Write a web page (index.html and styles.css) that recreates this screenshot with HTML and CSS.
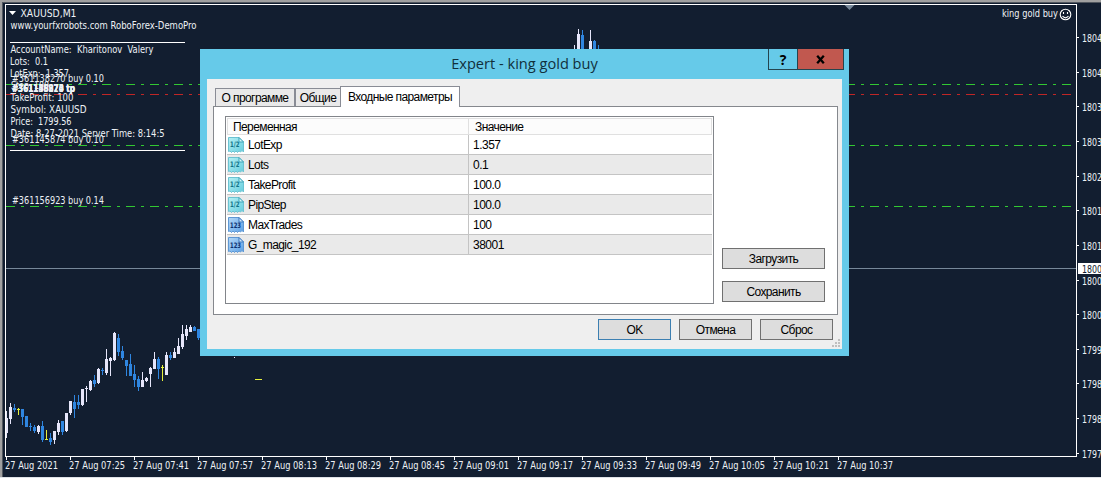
FILE: index.html
```html
<!DOCTYPE html>
<html lang="ru">
<head>
<meta charset="utf-8">
<title>XAUUSD,M1</title>
<link rel="stylesheet" href="styles.css">
</head>
<body>
<main class="terminal">
  <svg class="chart" width="1101" height="478" viewBox="0 0 1101 478">
    <path class="edge" d="M0 0H1101V2H2V478H0Z"/>
    <path class="edge-dark" d="M2 2H1101V3H3V478H2Z"/>
    <path class="edge-light" d="M0 477H1101V478H0Z"/>
    <g shape-rendering="crispEdges">
      <path class="order" d="M6 84.5H1073"/>
      <path class="order" d="M6 145.5H1073"/>
      <path class="order" d="M6 206.5H1073"/>
      <path class="profit" d="M6 94.5H1073"/>
      <path class="price" d="M6 268.5H1076"/>
      <path class="frame" d="M5.500 4.500H1076.500V456.500H5.500Z"/>
      <path class="rule" d="M10 42.500H185M10 150.500H185"/>
      <path class="rule" id="ticks"/>
      <path class="bull" id="bull"/>
      <path class="bear" id="bear"/>
      <path class="doji" id="doji"/>
    </g>
    <path class="shift" d="M844.500 5H854.500L849.500 10Z"/>
    <path class="white" d="M9 11H16L12.500 15Z"/>
    <rect class="white" x="1078" y="263" width="23" height="11"/>
    <g class="label">
      <text x="20.500" y="16.500" textLength="56">XAUUSD,M1</text>
      <text x="10.500" y="29" textLength="186">www.yourfxrobots.com RoboForex-DemoPro</text>
      <text x="10.500" y="53" textLength="143" xml:space="preserve">AccountName:  Kharitonov  Valery</text>
      <text x="10" y="65" textLength="38" xml:space="preserve">Lots:  0.1</text>
      <text x="10" y="77" textLength="59" xml:space="preserve">LotExp:  1.357</text>
      <text x="12" y="82" textLength="92">#361138270 buy 0.10</text>
      <text x="11" y="89" textLength="38">Step: 100</text>
      <g class="bold">
        <text x="12" y="92" textLength="63">#361138270 tp</text>
        <text x="12" y="92" textLength="63">#361145874 tp</text>
        <text x="12" y="92" textLength="63">#361156923 tp</text>
      </g>
      <text x="10.500" y="101" textLength="63">TakeProfit: 100</text>
      <text x="10.500" y="113" textLength="76">Symbol: XAUUSD</text>
      <text x="10.500" y="125" textLength="61" xml:space="preserve">Price:  1799.56</text>
      <text x="10.500" y="137" textLength="154">Date: 8-27-2021 Server Time: 8:14:5</text>
      <text x="12" y="143" textLength="92">#361145874 buy 0.10</text>
      <text x="12" y="204" textLength="92">#361156923 buy 0.14</text>
      <text x="1002" y="17" textLength="56">king gold buy</text>
    </g>
    <g class="label" id="axis"></g>
    <g class="smile">
      <circle cx="1065.500" cy="14.500" r="5.300"/>
      <path d="M1062.500 16.200Q1065.500 19.500 1068.500 16.200M1063.500 12V14M1067.500 12V14"/>
    </g>
  </svg>

  <section class="dialog">
    <header class="titlebar">
      <h1 class="title">Expert - king gold buy</h1>
      <div class="window-buttons">
        <button class="help">?</button>
        <button class="close"><svg width="9" height="9" viewBox="0 0 9 9"><path d="M1.200 .8 7.800 8.200M7.800 .8 1.200 8.200"/></svg></button>
      </div>
    </header>
    <div class="client">
      <nav class="tabs">
        <button class="tab about">О программе</button>
        <button class="tab common">Общие</button>
        <button class="tab active">Входные параметры</button>
      </nav>
      <div class="page">
        <div class="table">
          <div class="row head"><span class="name">Переменная</span><span class="value">Значение</span></div>
          <div class="row"><span class="name"><svg class="icon"><use href="#real"/></svg>LotExp</span><span class="value">1.357</span></div>
          <div class="row"><span class="name"><svg class="icon"><use href="#real"/></svg>Lots</span><span class="value">0.1</span></div>
          <div class="row"><span class="name"><svg class="icon"><use href="#real"/></svg>TakeProfit</span><span class="value">100.0</span></div>
          <div class="row"><span class="name"><svg class="icon"><use href="#real"/></svg>PipStep</span><span class="value">100.0</span></div>
          <div class="row"><span class="name"><svg class="icon"><use href="#int"/></svg>MaxTrades</span><span class="value">100</span></div>
          <div class="row"><span class="name"><svg class="icon"><use href="#int"/></svg>G_magic_192</span><span class="value">38001</span></div>
        </div>
        <div class="side">
          <button class="btn">Загрузить</button>
          <button class="btn">Сохранить</button>
        </div>
      </div>
      <footer class="actions">
        <button class="btn default">OK</button>
        <button class="btn">Отмена</button>
        <button class="btn">Сброс</button>
      </footer>
      <svg class="grip" width="8" height="8" viewBox="0 0 8 8"><path d="M6 0h2v2h-2zM3 3h2v2h-2zM6 3h2v2h-2zM0 6h2v2h-2zM3 6h2v2h-2zM6 6h2v2h-2z"/></svg>
    </div>
  </section>
</main>

<svg class="defs" width="0" height="0">
  <defs>
    <linearGradient id="cyan" x2="1" y2="1"><stop offset="0" stop-color="#b4f0f4"/><stop offset="1" stop-color="#66cddd"/></linearGradient>
    <linearGradient id="blue" x2="1" y2="1"><stop offset="0" stop-color="#b4d8f8"/><stop offset="1" stop-color="#5b9fe4"/></linearGradient>
    <symbol id="real" viewBox="0 0 16 16">
      <path d="M.5 .5H11L15.500 5V15L14 13.500 12.500 15 11 14 9.500 15.500 8 14 6.500 15.500 5 14 3.500 15.500 2 14 .5 14.500Z" fill="url(#cyan)" stroke="#6cc3d2"/>
      <path d="M11 .5V5H15.500Z" fill="#d8f8fa" stroke="#3fa3b8"/>
      <text class="glyph real" x="2" y="9.500" textLength="9.500" lengthAdjust="spacingAndGlyphs">1/2</text>
    </symbol>
    <symbol id="int" viewBox="0 0 16 16">
      <path d="M.5 .5H11L15.500 5V15L14 13.500 12.500 15 11 14 9.500 15.500 8 14 6.500 15.500 5 14 3.500 15.500 2 14 .5 14.500Z" fill="url(#blue)" stroke="#5f98d4"/>
      <path d="M11 .5V5H15.500Z" fill="#d4e9fc" stroke="#3c79be"/>
      <text class="glyph int" x="2" y="11" textLength="11" lengthAdjust="spacingAndGlyphs">123</text>
    </symbol>
  </defs>
</svg>
<script src="chart.js"></script>
</body>
</html>
```
FILE: styles.css
```css
* { box-sizing: border-box; }
body { margin: 0; background: #121e30; }
button { font: inherit; color: inherit; letter-spacing: inherit; padding: 0; margin: 0; border-radius: 0; }
.defs { position: absolute; }

.terminal { position: relative; width: 1101px; height: 478px; overflow: hidden; background: #121e30; }
.chart { display: block; }
.chart path { fill: none; }
.chart .edge { fill: #a0a0a0; }
.chart .edge-dark { fill: #50565e; }
.chart .edge-light { fill: #dfe3e8; }
.chart .frame, .chart .rule { stroke: #fff; }
.chart .order { stroke: #32c832; stroke-dasharray: 9 6 3 6; }
.chart .profit { stroke: #c02626; stroke-dasharray: 9 6 3 6; }
.chart .price { stroke: #778899; }
.chart .shift { fill: #778899; }
.chart .white { fill: #fff; }
.chart .bull { fill: #e6e6fa; }
.chart .bear { fill: #2f86e0; }
.chart .doji { fill: #e6f03c; }
.label { font: 10.3px "DejaVu Sans Condensed", "DejaVu Sans", sans-serif; fill: #eef2f6; }
.label .bold { font-weight: bold; font-size: 10px; }
.label .current { fill: #121e30; }
.smile { fill: none; stroke: #fff; stroke-width: 1.1; }

.dialog {
  position: absolute; left: 200px; top: 49px; width: 649px; height: 307px;
  display: flex; flex-direction: column; padding: 0 7px 7px;
  background: #66cae9; color: #000;
  font: 12px "Liberation Sans", Arial, sans-serif; letter-spacing: -.6px;
}
.titlebar { height: 30px; display: grid; grid-template-columns: 1fr; letter-spacing: 0; }
.title {
  grid-area: 1 / 1; margin: 0; text-align: center; color: #11303c;
  font: 14.6px/29px "Open Sans", "Noto Sans", sans-serif;
}
.window-buttons { grid-area: 1 / 1; justify-self: end; display: flex; height: 21px; margin-right: -2px; }
.window-buttons button { border: 1px solid #24454f; border-top: 0; background: none; font: bold 14px "Open Sans", sans-serif; }
.window-buttons .help { width: 29px; border-right: 0; }
.window-buttons .close { width: 47px; background: #c1584f; display: flex; align-items: center; justify-content: center; }
.close path { stroke: #000; stroke-width: 2.3; }

.client { position: relative; height: 270px; padding: 7px 4px 0 6px; background: #efefef; }
.tabs { display: flex; align-items: flex-end; height: 20px; padding-left: 2px; }
.tab { height: 18px; border: 1px solid #898c95; border-bottom: 0; background: #e9e9e9; padding-top: 1px; white-space: nowrap; }
.about { width: 80px; }
.common { width: 46px; }
.tab.active { position: relative; width: 120px; height: 21px; margin: 0 0 -1px -1px; background: #fff; padding: 0 0 1px; }
.page { display: flex; gap: 8px; height: 209px; padding: 9px 12px 0 11px; border: 1px solid #85888d; background: #fff; }
.table { width: 489px; height: 188px; padding: 1px; border: 1px solid #82858a; }
.row { display: flex; height: 20px; border-bottom: 1px solid #c4c4c4; }
.row:not(.head) .value { letter-spacing: -.5px; }
.row:nth-child(odd):not(.head) { background: #eaeaea; }
.row.head { height: 17px; border: 1px solid #e0e0e0; background: #fcfcfc; }
.name { display: flex; align-items: center; width: 242px; padding-left: 1px; gap: 4px; border-right: 1px solid #c4c4c4; }
.value { display: flex; align-items: center; padding-left: 4px; }
.head .name { width: 241px; padding-left: 5px; border-color: #e0e0e0; }
.head .value { padding-left: 6px; }
.icon { width: 16px; height: 16px; }
.glyph { font: bold 7.5px "DejaVu Sans", sans-serif; letter-spacing: 0; }
.glyph.real { fill: #107487; }
.glyph.int { fill: #0b2f70; }
.side { display: flex; flex-direction: column; gap: 12px; width: 103px; padding-top: 132px; }
.btn { width: 73px; height: 21px; border: 1px solid #707070; background: #dddddd; }
.side .btn { width: 103px; }
.btn.default { border-color: #3c7fb1; }
.actions { display: flex; justify-content: flex-end; gap: 8px; padding: 4px 5px 0 0; }
.grip { position: absolute; right: 2px; bottom: 2px; fill: #bfbfbf; }
```
FILE: chart.js
```js
// Each bar: x, high, low, body top, body bottom, series.
const bars = [
  [6,411,438,418,433,'bull'],[10,403,424,407,419,'bull'],[14,404,412,408,410,'bear'],
  [22,409,425,409,417,'bear'],[26,416,427,416,427,'bear'],[30,423,431,426,427,'bear'],
  [34,425,433,427,431,'bear'],[38,425,434,426,432,'bull'],[42,421,442,426,440,'bear'],
  [50,433,445,438,442,'bear'],[54,431,444,431,440,'bull'],[58,420,435,423,432,'bull'],
  [62,421,435,421,432,'bear'],[66,413,432,413,431,'bull'],[70,401,415,401,413,'bull'],
  [74,395,418,402,409,'bear'],[78,395,409,402,405,'bear'],[82,389,406,389,405,'bull'],
  [86,386,402,388,389,'bull'],[90,380,391,381,390,'bull'],[94,375,387,380,384,'bear'],
  [98,368,384,369,383,'bull'],[102,368,375,370,371,'bear'],[106,349,375,359,373,'bull'],
  [110,357,376,358,361,'bull'],[114,332,361,333,360,'bull'],[118,334,356,338,352,'bear'],
  [122,346,360,351,358,'bear'],[126,360,376,360,366,'bear'],[130,354,376,364,376,'bear'],
  [134,365,387,374,380,'bear'],[138,376,391,379,387,'bear'],[142,372,387,380,387,'bull'],
  [146,377,382,378,381,'bull'],[150,367,387,368,374,'bull'],[154,352,369,359,369,'bull'],
  [158,357,379,359,369,'bear'],[166,352,375,355,375,'bull'],[170,352,360,355,358,'bear'],
  [174,348,358,352,358,'bull'],[178,338,354,346,354,'bull'],[182,325,349,334,347,'bull'],
  [186,325,340,329,336,'bull'],[190,325,332,327,332,'bull'],[194,326,331,327,331,'bear'],
  [198,329,340,329,338,'bear'],
  [574,45,50,48,48,'bull'],[578,29,50,34,50,'bull'],[582,30,50,35,50,'bear'],
  [590,30,50,41,50,'bull'],[594,40,50,41,50,'bear'],[598,45,50,48,48,'bear'],
  [234,357,358,357,357,'bull']
];
const paths = { bull: '', bear: '' };
for (const [x, high, low, top, bottom, series] of bars) {
  paths[series] += `M${x} ${high}h1V${low}h-1z`;
  if (bottom > top) {
    const left = Math.max(x - 1, 6);
    paths[series] += `M${left} ${top}H${x + 2}V${bottom}H${left}z`;
  }
}
document.getElementById('bull').setAttribute('d', paths.bull);
document.getElementById('bear').setAttribute('d', paths.bear);
document.getElementById('doji').setAttribute('d',
  'M18 408h1v7h-1zM17 409h3v1h-3zM46 430h1v10h-1zM45 439h3v1h-3zM162 365h1v16h-1zM161 367h3v1h-3zM255 379h7v1h-7z');

const axis = document.getElementById('axis');
function label(x, y, text, length, cls) {
  const node = document.createElementNS('http://www.w3.org/2000/svg', 'text');
  node.setAttribute('x', x);
  node.setAttribute('y', y);
  node.setAttribute('textLength', length);
  if (cls) node.setAttribute('class', cls);
  node.textContent = text;
  axis.append(node);
}
let ticks = '';
const times = ['2021', '07:25', '07:41', '07:57', '08:13', '08:29', '08:45', '09:01', '09:17', '09:33', '09:49', '10:05', '10:21', '10:37'];
times.forEach((time, i) => {
  ticks += `M${6.5 + i * 64} 457v3`;
  label(5 + i * 64, 469, '27 Aug ' + time, i ? 56 : 53);
});
const prices = [[37, 1804], [72, 1804], [106, 1803], [141, 1803], [176, 1802], [210, 1801], [245, 1801], [280, 1800], [314, 1800], [349, 1799], [383, 1798], [418, 1798], [453, 1797]];
for (const [y, price] of prices) {
  ticks += `M1077 ${y + 0.5}h2`;
  label(1082, y + 4.5, price, 20);
}
label(1082, 272.5, 1800, 20, 'current');
document.getElementById('ticks').setAttribute('d', ticks);
// Fit each glyph to its label width.
document.querySelectorAll('.label text').forEach(node => node.setAttribute('lengthAdjust', 'spacingAndGlyphs'));
```
